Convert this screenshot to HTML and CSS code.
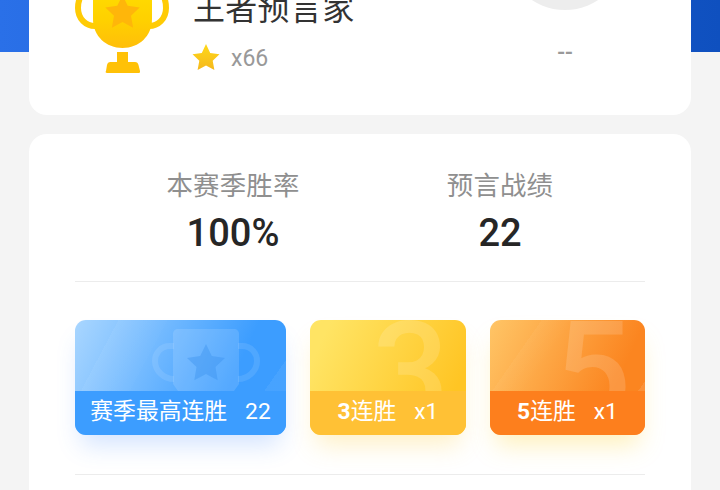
FILE: index.html
```html
<!DOCTYPE html>
<html lang="en">
<head>
    <meta charset="UTF-8">
    <meta name="viewport" content="width=device-width, initial-scale=1.0">
    <title>预言战绩</title>
    <link rel="stylesheet" href="styles.css">
</head>
<body>
    <div class="page">
        <div class="header-bg"></div>

        <div class="card profile">
            <svg class="trophy" viewBox="0 0 94 100" width="94" height="100" aria-hidden="true">
                <defs>
                    <linearGradient id="cup" x1="0" y1="0" x2="0" y2="1">
                        <stop offset="0" stop-color="#ffe000"/>
                        <stop offset=".6" stop-color="#ffd000"/>
                        <stop offset="1" stop-color="#ffbe0a"/>
                    </linearGradient>
                </defs>
                <path d="M20 15C9 15 3 24 3 35c0 11 8 18 17 18" fill="none" stroke="#ffcb05" stroke-width="6"/>
                <path d="M75 15c11 0 16 9 16 20 0 11-8 18-17 18" fill="none" stroke="#ffcb05" stroke-width="6"/>
                <path d="M18 8h59v38c0 17-13 29-29.500 29S18 63 18 46z" fill="url(#cup)"/>
                <path d="M47.500 22l5.200 10.800 12 1.700-8.700 8.300 2.100 11.900-10.600-5.700-10.600 5.700 2.100-11.900-8.700-8.300 12-1.700z" fill="#ffb60a"/>
                <path d="M42 79h11v10h7c2 0 3 1 3.500 3l1.500 6c0 1 0 2-1 2H32c-1 0-2-1-1-2l1-6c.5-2 1.500-3 3.500-3H42z" fill="#ffc107"/>
            </svg>
            <div class="profile-info">
                <div class="rank-name">王者预言家</div>
                <div class="stars">
                    <svg class="star" viewBox="0 0 28 28" width="28" height="28" aria-hidden="true">
                        <defs>
                            <linearGradient id="gold" x1="0" y1="0" x2="0" y2="1">
                                <stop offset="0" stop-color="#ffd91a"/>
                                <stop offset="1" stop-color="#f5b81c"/>
                            </linearGradient>
                        </defs>
                        <path d="M14 0l4.200 8.900 9.300 1.300-6.800 6.500 1.700 9.300L14 21.500 5.600 26l1.700-9.300L.5 10.200l9.300-1.300z" fill="url(#gold)"/>
                    </svg>
                    <span>x66</span>
                </div>
            </div>
            <div class="rank-side">
                <div class="avatar"></div>
                <div class="dash">--</div>
            </div>
        </div>

        <div class="card season">
            <div class="stats">
                <div class="stat">
                    <div class="stat-label">本赛季胜率</div>
                    <div class="stat-value">100%</div>
                </div>
                <div class="stat">
                    <div class="stat-label">预言战绩</div>
                    <div class="stat-value">22</div>
                </div>
            </div>

            <div class="badges">
                <div class="badge blue">
                    <svg class="cup-mark" viewBox="0 0 108 62" width="108" height="62" aria-hidden="true">
                        <path d="M22 17H18C8 17 3 25 3 32c0 10 9 18 19 18M86 17h4c10 0 15 8 15 15 0 10-9 18-19 18" fill="none" stroke="#fff" stroke-opacity=".1" stroke-width="6"/>
                        <path d="M26 0h56c3 0 5 2 5 5v50l-5 7H26l-5-7V5c0-3 2-5 5-5z" fill="#fff" fill-opacity=".13"/>
                        <path d="M54 15l5.800 12 13.200 1.900-9.500 9.200 2.200 13.100L54 45l-11.700 6.200 2.200-13.100L35 28.900 48.200 27z" fill="#3a90ee" fill-opacity=".4"/>
                    </svg>
                    <div class="badge-foot"><span>赛季最高连胜</span><span>22</span></div>
                </div>
                <div class="badge yellow">
                    <div class="big-num">3</div>
                    <div class="badge-foot"><span><b>3</b>连胜</span><span>x1</span></div>
                </div>
                <div class="badge orange">
                    <div class="big-num">5</div>
                    <div class="badge-foot"><span><b>5</b>连胜</span><span>x1</span></div>
                </div>
            </div>

            <div class="divider"></div>
        </div>
    </div>
</body>
</html>
```

FILE: styles.css
```css
html, body {
    margin: 0;
    padding: 0;
    height: 490px;
    overflow: hidden;
}
body {
    background-color: #f4f4f4;
    font-family: Roboto, "Noto Sans CJK SC", sans-serif;
    color: #262626;
}
.page {
    position: relative;
    height: 490px;
    overflow: hidden;
    padding: 0 29px;
    box-sizing: border-box;
}
.header-bg {
    position: absolute;
    top: 0;
    left: 0;
    right: 0;
    height: 52px;
    background: linear-gradient(90deg, #2a70e8, #0f50bf);
}
.card {
    position: relative;
    background-color: #fff;
    border-radius: 18px;
}
.profile {
    height: 115px;
    border-radius: 0 0 18px 18px;
    display: flex;
    padding-left: 46px;
    overflow: hidden;
}
.trophy {
    flex: none;
    margin-top: -27px;
}
.profile-info {
    margin-left: 24px;
    margin-top: -15px;
}
.rank-name {
    font-size: 32px;
    line-height: 48px;
    letter-spacing: 0.3px;
    color: #333;
}
.stars {
    display: flex;
    align-items: center;
    margin-top: 10px;
    margin-left: -1px;
    color: #999;
    font-size: 23px;
    line-height: 28px;
}
.stars span {
    margin-left: 11px;
    padding-top: 2px;
}
.rank-side {
    position: absolute;
    top: 0;
    left: 476px;
    width: 120px;
    text-align: center;
}
.avatar {
    width: 120px;
    height: 120px;
    margin-top: -110px;
    border-radius: 50%;
    background-color: #ededed;
}
.dash {
    margin-top: 31px;
    font-size: 23px;
    line-height: 24px;
    font-weight: 500;
    color: #999;
}
.season {
    margin-top: 19px;
    height: 400px;
    padding: 0 46px;
}
.stats {
    display: grid;
    grid-template-columns: 316px 218px;
    height: 148px;
    border-bottom: 1px solid #ececec;
    text-align: center;
    box-sizing: border-box;
    padding-top: 33px;
}
.stat-label {
    font-size: 26.4px;
    line-height: 38px;
    letter-spacing: 0.2px;
    color: #8f8f8f;
}
.stat-value {
    font-size: 38px;
    font-weight: 500;
    line-height: 50px;
    margin-top: 3px;
}
.badges {
    display: flex;
    gap: 24px;
    margin-top: 38px;
}
.badge {
    position: relative;
    height: 115px;
    flex: none;
    width: 156px;
    border-radius: 11px;
}
.badge.blue {
    width: 211px;
    background: linear-gradient(125deg, rgba(255,255,255,0) 82%, rgba(255,255,255,.06) 82%), linear-gradient(118deg, rgba(255,255,255,0) 16%, rgba(255,255,255,.05) 16%, rgba(255,255,255,.01) 34%, rgba(255,255,255,0) 34%), linear-gradient(115deg, #a9d6ff, #3c9dff 70%);
    box-shadow: 0 16px 24px -6px rgba(60, 130, 255, .22);
}
.badge.yellow {
    background: linear-gradient(115deg, #ffe464 10%, #ffc524 85%);
    box-shadow: 0 16px 24px -6px rgba(255, 210, 70, .3);
}
.badge.orange {
    width: 155px;
    background: linear-gradient(125deg, rgba(255,255,255,0) 84%, rgba(255,255,255,.1) 84%), linear-gradient(125deg, rgba(255,255,255,0) 22%, rgba(255,255,255,.04) 22%, rgba(255,255,255,0) 36%), linear-gradient(115deg, #ffc566, #fb8520 75%);
    box-shadow: 0 16px 24px -6px rgba(255, 215, 70, .36);
}
.cup-mark {
    position: absolute;
    top: 9px;
    left: 77px;
}
.big-num {
    position: absolute;
    top: 0;
    left: 0;
    right: 0;
    height: 71px;
    overflow: hidden;
    border-radius: 11px 11px 0 0;
    font-size: 135px;
    font-weight: 500;
    line-height: 105px;
    color: rgba(255, 255, 255, .15);
    text-align: right;
    padding-right: 17px;
    box-sizing: border-box;
}
.orange .big-num {
    padding-right: 14px;
}
.badge-foot {
    position: absolute;
    left: 0;
    right: 0;
    bottom: 0;
    height: 44px;
    box-sizing: border-box;
    padding-bottom: 2px;
    border-radius: 0 0 11px 11px;
    display: flex;
    justify-content: center;
    align-items: center;
    gap: 18px;
    font-size: 22.8px;
    line-height: 1;
    color: #fff;
}
.badge-foot b {
    font-weight: 700;
}
.blue .badge-foot {
    background-color: #3c9dff;
}
.yellow .badge-foot {
    background-color: #ffc135;
}
.orange .badge-foot {
    background-color: #fd7f1d;
}
.divider {
    margin-top: 39px;
    border-top: 1px solid #ececec;
}
```
